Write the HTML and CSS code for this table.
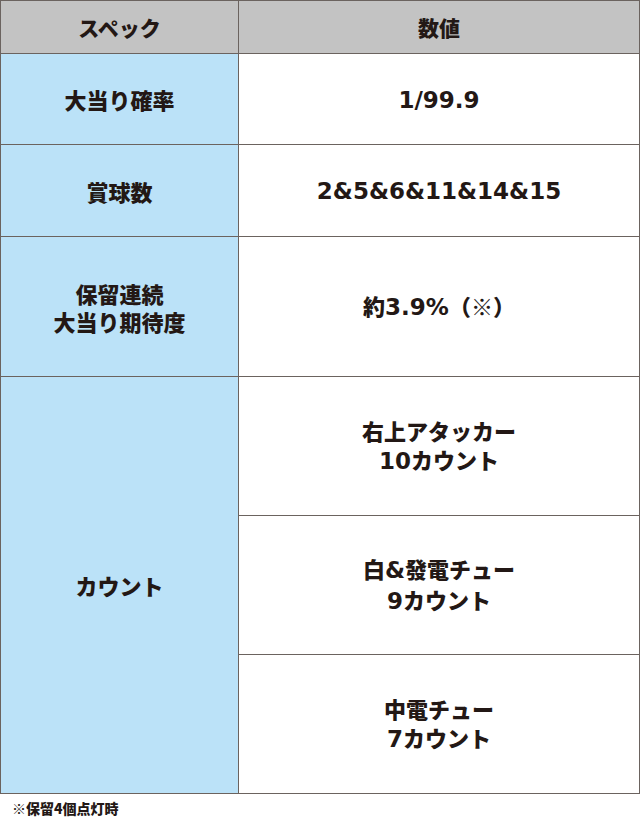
FILE: index.html
```html
<!DOCTYPE html>
<html lang="ja">
<head>
<meta charset="utf-8">
<title>スペック</title>
<link rel="stylesheet" href="styles.css">
</head>
<body>
<table class="spec">
  <colgroup>
    <col class="col-label">
    <col class="col-value">
  </colgroup>
  <thead>
    <tr class="row-head">
      <th>スペック</th>
      <th>数値</th>
    </tr>
  </thead>
  <tbody>
    <tr class="row-a">
      <th class="label">大当り確率</th>
      <td class="value"><span class="num">1/99.9</span></td>
    </tr>
    <tr class="row-b">
      <th class="label">賞球数</th>
      <td class="value"><span class="num">2&amp;5&amp;6&amp;11&amp;14&amp;15</span></td>
    </tr>
    <tr class="row-c">
      <th class="label">保留連続<br>大当り期待度</th>
      <td class="value">約<span class="num">3.9%</span>（※）</td>
    </tr>
    <tr class="row-d">
      <th class="label" rowspan="3">カウント</th>
      <td class="value">右上アタッカー<br><span class="num">10</span>カウント</td>
    </tr>
    <tr class="row-d">
      <td class="value">白<span class="amp">&amp;</span>發電チュー<br><span class="num">9</span>カウント</td>
    </tr>
    <tr class="row-d">
      <td class="value">中電チュー<br><span class="num">7</span>カウント</td>
    </tr>
  </tbody>
</table>
<p class="note">※保留4個点灯時</p>
</body>
</html>
```

FILE: styles.css
```css
html, body {
  margin: 0;
  padding: 0;
  background: #ffffff;
}

body {
  width: 640px;
  font-family: "Noto Sans CJK JP", "Noto Sans", sans-serif;
  font-weight: 900;
  color: #231815;
}

.spec {
  width: 640px;
  table-layout: fixed;
  border-collapse: collapse;
}

.col-label {
  width: 238px;
}

.spec th,
.spec td {
  border: 1px solid #6b635f;
  padding: 0;
  text-align: center;
  vertical-align: middle;
  font-weight: 900;
}

.row-head th {
  height: 52px;
  background: #c3c3c3;
  font-size: 21px;
  line-height: 28px;
}

.label {
  background: #bbe2f8;
  font-size: 22px;
  line-height: 28px;
}

.value {
  background: #ffffff;
  font-size: 22px;
  line-height: 29px;
}

.row-a td, .row-a th { height: 90px; }
.row-b td, .row-b th { height: 91px; }
.row-c td, .row-c th { height: 139px; }
.row-d td { height: 138px; }

.num,
.amp {
  font-family: "DejaVu Sans", sans-serif;
  font-size: 23px;
  font-weight: 700;
}

.note {
  margin: 4px 0 0;
  padding-left: 12px;
  font-size: 14px;
  line-height: 20px;
}
```
